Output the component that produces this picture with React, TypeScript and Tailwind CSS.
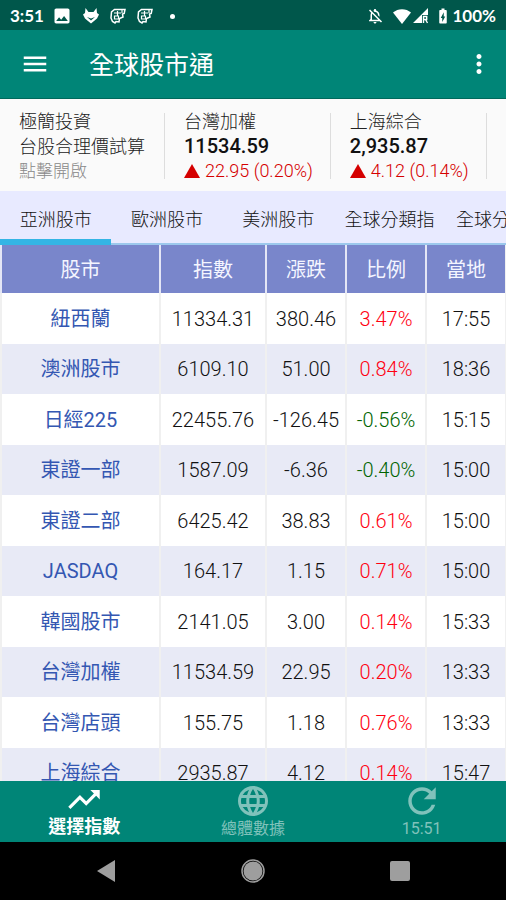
import React from "react";
import { IoMdRefresh, IoMdTrendingUp } from "react-icons/io";
import {
  MdBatteryChargingFull,
  MdImage,
  MdLanguage,
  MdMenu,
  MdMoreVert,
  MdOutlineNotificationsOff,
} from "react-icons/md";

type Quote = { name: string; price: string; change: string };

type Row = {
  name: string;
  index: string;
  change: string;
  ratio: string;
  time: string;
};

const quotes: Quote[] = [
  { name: "台灣加權", price: "11534.59", change: "22.95 (0.20%)" },
  { name: "上海綜合", price: "2,935.87", change: "4.12 (0.14%)" },
  { name: "香港恆生", price: "26,893.73", change: "12.48 (0.05%)" },
];

const tabs = ["亞洲股市", "歐洲股市", "美洲股市", "全球分類指", "全球分類股"];

const columns = ["股市", "指數", "漲跌", "比例", "當地"];

const rows: Row[] = [
  { name: "紐西蘭", index: "11334.31", change: "380.46", ratio: "3.47%", time: "17:55" },
  { name: "澳洲股市", index: "6109.10", change: "51.00", ratio: "0.84%", time: "18:36" },
  { name: "日經225", index: "22455.76", change: "-126.45", ratio: "-0.56%", time: "15:15" },
  { name: "東證一部", index: "1587.09", change: "-6.36", ratio: "-0.40%", time: "15:00" },
  { name: "東證二部", index: "6425.42", change: "38.83", ratio: "0.61%", time: "15:00" },
  { name: "JASDAQ", index: "164.17", change: "1.15", ratio: "0.71%", time: "15:00" },
  { name: "韓國股市", index: "2141.05", change: "3.00", ratio: "0.14%", time: "15:33" },
  { name: "台灣加權", index: "11534.59", change: "22.95", ratio: "0.20%", time: "13:33" },
  { name: "台灣店頭", index: "155.75", change: "1.18", ratio: "0.76%", time: "13:33" },
  { name: "上海綜合", index: "2935.87", change: "4.12", ratio: "0.14%", time: "15:47" },
];

function FoxIcon() {
  return (
    <svg viewBox="0 0 16 16" className="size-4" fill="currentColor" aria-hidden="true">
      <path d="M2.500 0l3 4h5l3-4 .5 5 2 1.500-2 4-6 5-6-5-2-4L2 5z" />
      <path d="M4 9l4 1.500L12 9l-4 3.500z" fill="#00574b" />
    </svg>
  );
}

function StampIcon() {
  return (
    <svg
      viewBox="0 0 16 16"
      className="size-4"
      fill="none"
      stroke="currentColor"
      strokeWidth="1.500"
      aria-hidden="true"
    >
      <path d="M4.500 1.500H15l-.8 4-1.700.5.5 3-3.500 1.500L9 14l-3-.5-1 1.500-2.500-1.500L1 10l.5-6z" />
      <path d="M4 5h7M4.500 8h4v3h-4zM7.500 3v5M12 2v3" strokeWidth="1.200" />
    </svg>
  );
}

function StatusBar() {
  return (
    <div className="flex h-[30px] shrink-0 items-center bg-[#00574b] px-[10px] pt-[2px] font-['Lato',sans-serif] text-[17px] font-bold">
      <span className="w-[42px]">3:51</span>
      <div className="flex items-center gap-[11px]">
        <MdImage className="size-5" aria-hidden="true" />
        <FoxIcon />
        <StampIcon />
        <StampIcon />
        <span className="ml-[6px] size-[5px] rounded-full bg-white" />
      </div>
      <div className="ml-auto flex items-center">
        <MdOutlineNotificationsOff className="mr-[9px] size-[18px]" aria-hidden="true" />
        <svg viewBox="0 0 18 15" className="mr-[2px] h-[15px] w-[18px]" fill="currentColor" aria-hidden="true">
          <path d="M0 3.500C5-1 13-1 18 3.500L9 15z" />
        </svg>
        <svg viewBox="0 0 16 16" className="mr-[5px] size-4" fill="currentColor" aria-hidden="true">
          <path d="M15 0v7H9v8H0z" />
          <path d="M10.500 15V8.500h3.200v3h-3M12.500 11.500l2 3.500" fill="none" stroke="currentColor" strokeWidth="1.400" />
        </svg>
        <MdBatteryChargingFull className="size-[18px]" aria-hidden="true" />
        <span>100%</span>
      </div>
    </div>
  );
}

function AppBar() {
  return (
    <header className="flex h-[69px] shrink-0 items-center border-b border-[#00695c] bg-[#008577] pr-3 pl-5">
      <button type="button" aria-label="選單" className="mr-[39px]">
        <MdMenu className="size-[30px]" />
      </button>
      <h1 className="pt-1 text-[25px] leading-8">全球股市通</h1>
      <button type="button" aria-label="更多" className="ml-auto">
        <MdMoreVert className="size-[30px]" />
      </button>
    </header>
  );
}

function Ticker() {
  return (
    <section className="flex h-[92px] shrink-0 items-center overflow-hidden bg-[#fafafa] pt-[2px] text-lg leading-[25px] font-light text-[#222]">
      <a href="#valuation" className="shrink-0 px-[19px]">
        <p>極簡投資</p>
        <p>台股合理價試算</p>
        <p className="text-[17px] leading-6 text-[#888]">點擊開啟</p>
      </a>
      {quotes.map((quote) => (
        <React.Fragment key={quote.name}>
          <div className="h-[66px] w-px shrink-0 bg-[#ddd]" />
          <div className="shrink-0 pr-[17px] pl-[19px]">
            <p>{quote.name}</p>
            <p className="text-xl leading-[25px] font-medium text-[#111]">{quote.price}</p>
            <p className="flex items-center gap-[5px] leading-6 text-[#d50000]">
              <svg viewBox="0 0 16 14" className="h-[14px] w-4" fill="#d50000" aria-hidden="true">
                <path d="M8 0l8 14H0z" />
              </svg>
              {quote.change}
            </p>
          </div>
        </React.Fragment>
      ))}
    </section>
  );
}

function Tabs() {
  return (
    <div
      role="tablist"
      className="flex h-[54px] shrink-0 overflow-hidden bg-[#e8eaff] text-lg font-light text-[#111] shadow-[inset_0_-2px_0_#9cc8ec]"
    >
      {tabs.map((tab, i) => (
        <button
          key={tab}
          type="button"
          role="tab"
          aria-selected={i === 0}
          className="w-[22%] shrink-0 pt-1 whitespace-nowrap aria-selected:shadow-[inset_0_-6px_0_#33b5e5]"
        >
          {tab}
        </button>
      ))}
    </div>
  );
}

function IndexTable() {
  return (
    <main className="min-h-0 flex-1 overflow-hidden bg-white">
      <table className="w-full table-fixed border-separate border-spacing-0 border-r border-[#f0f0f0] text-center text-xl font-light text-[#111]">
        <colgroup>
          <col />
          <col className="w-[106px]" />
          <col className="w-20" />
          <col className="w-20" />
          <col className="w-20" />
        </colgroup>
        <thead>
          <tr className="h-[48px] bg-[#7986cb] text-[#f4f5ff]">
            {columns.map((column) => (
              <th key={column} scope="col" className="border-l-2 border-[#e4e6f6] p-0 pt-[2px] font-normal">
                {column}
              </th>
            ))}
          </tr>
        </thead>
        <tbody>
          {rows.map((row) => (
            <tr key={row.name} className="odd:h-[51px] even:h-[50px] even:bg-[#e8eaf6]">
              <td className="border-l-2 border-[#f0f0f0] p-0">
                <a href="#detail" className="font-normal text-[#3457b2]">
                  {row.name}
                </a>
              </td>
              <td className="border-l-2 border-[#f0f0f0] p-0">{row.index}</td>
              <td className="border-l-2 border-[#f0f0f0] p-0">{row.change}</td>
              <td
                className={
                  row.ratio.startsWith("-")
                    ? "border-l-2 border-[#f0f0f0] p-0 text-[#006400]"
                    : "border-l-2 border-[#f0f0f0] p-0 text-[#ff0010]"
                }
              >
                {row.ratio}
              </td>
              <td className="border-l-2 border-[#f0f0f0] p-0">{row.time}</td>
            </tr>
          ))}
        </tbody>
      </table>
    </main>
  );
}

function BottomNav() {
  return (
    <nav className="grid h-[61px] shrink-0 grid-cols-3 bg-[#008577] text-base leading-4 text-[#80c2bb]">
      <button type="button" className="flex flex-col items-center text-lg leading-5 font-bold text-white">
        <IoMdTrendingUp className="size-9" />
        選擇指數
      </button>
      <button type="button" className="flex flex-col items-center pt-[2px] leading-5">
        <MdLanguage className="size-9" />
        總體數據
      </button>
      <button type="button" className="flex flex-col items-center">
        <IoMdRefresh className="size-10" />
        15:51
      </button>
    </nav>
  );
}

function SystemNav() {
  return (
    <div className="grid h-[58px] shrink-0 grid-cols-3 place-items-center bg-black px-8 text-[#9e9e9e]">
      <button type="button" aria-label="返回">
        <svg viewBox="0 0 18 22" className="h-[22px] w-[18px]" fill="currentColor">
          <path d="M18 0v22L0 11z" />
        </svg>
      </button>
      <button type="button" aria-label="主畫面">
        <svg viewBox="0 0 24 24" className="size-6">
          <circle cx="12" cy="12" r="11" fill="none" stroke="currentColor" strokeWidth="1.500" />
          <circle cx="12" cy="12" r="9.500" fill="currentColor" />
        </svg>
      </button>
      <button type="button" aria-label="最近使用" className="size-5 rounded-xs bg-[#9e9e9e]" />
    </div>
  );
}

export default function App() {
  return (
    <div className="flex h-screen flex-col overflow-hidden bg-white font-['Roboto','Noto_Sans_CJK_TC',sans-serif] text-white">
      <StatusBar />
      <AppBar />
      <Ticker />
      <Tabs />
      <IndexTable />
      <BottomNav />
      <SystemNav />
    </div>
  );
}
